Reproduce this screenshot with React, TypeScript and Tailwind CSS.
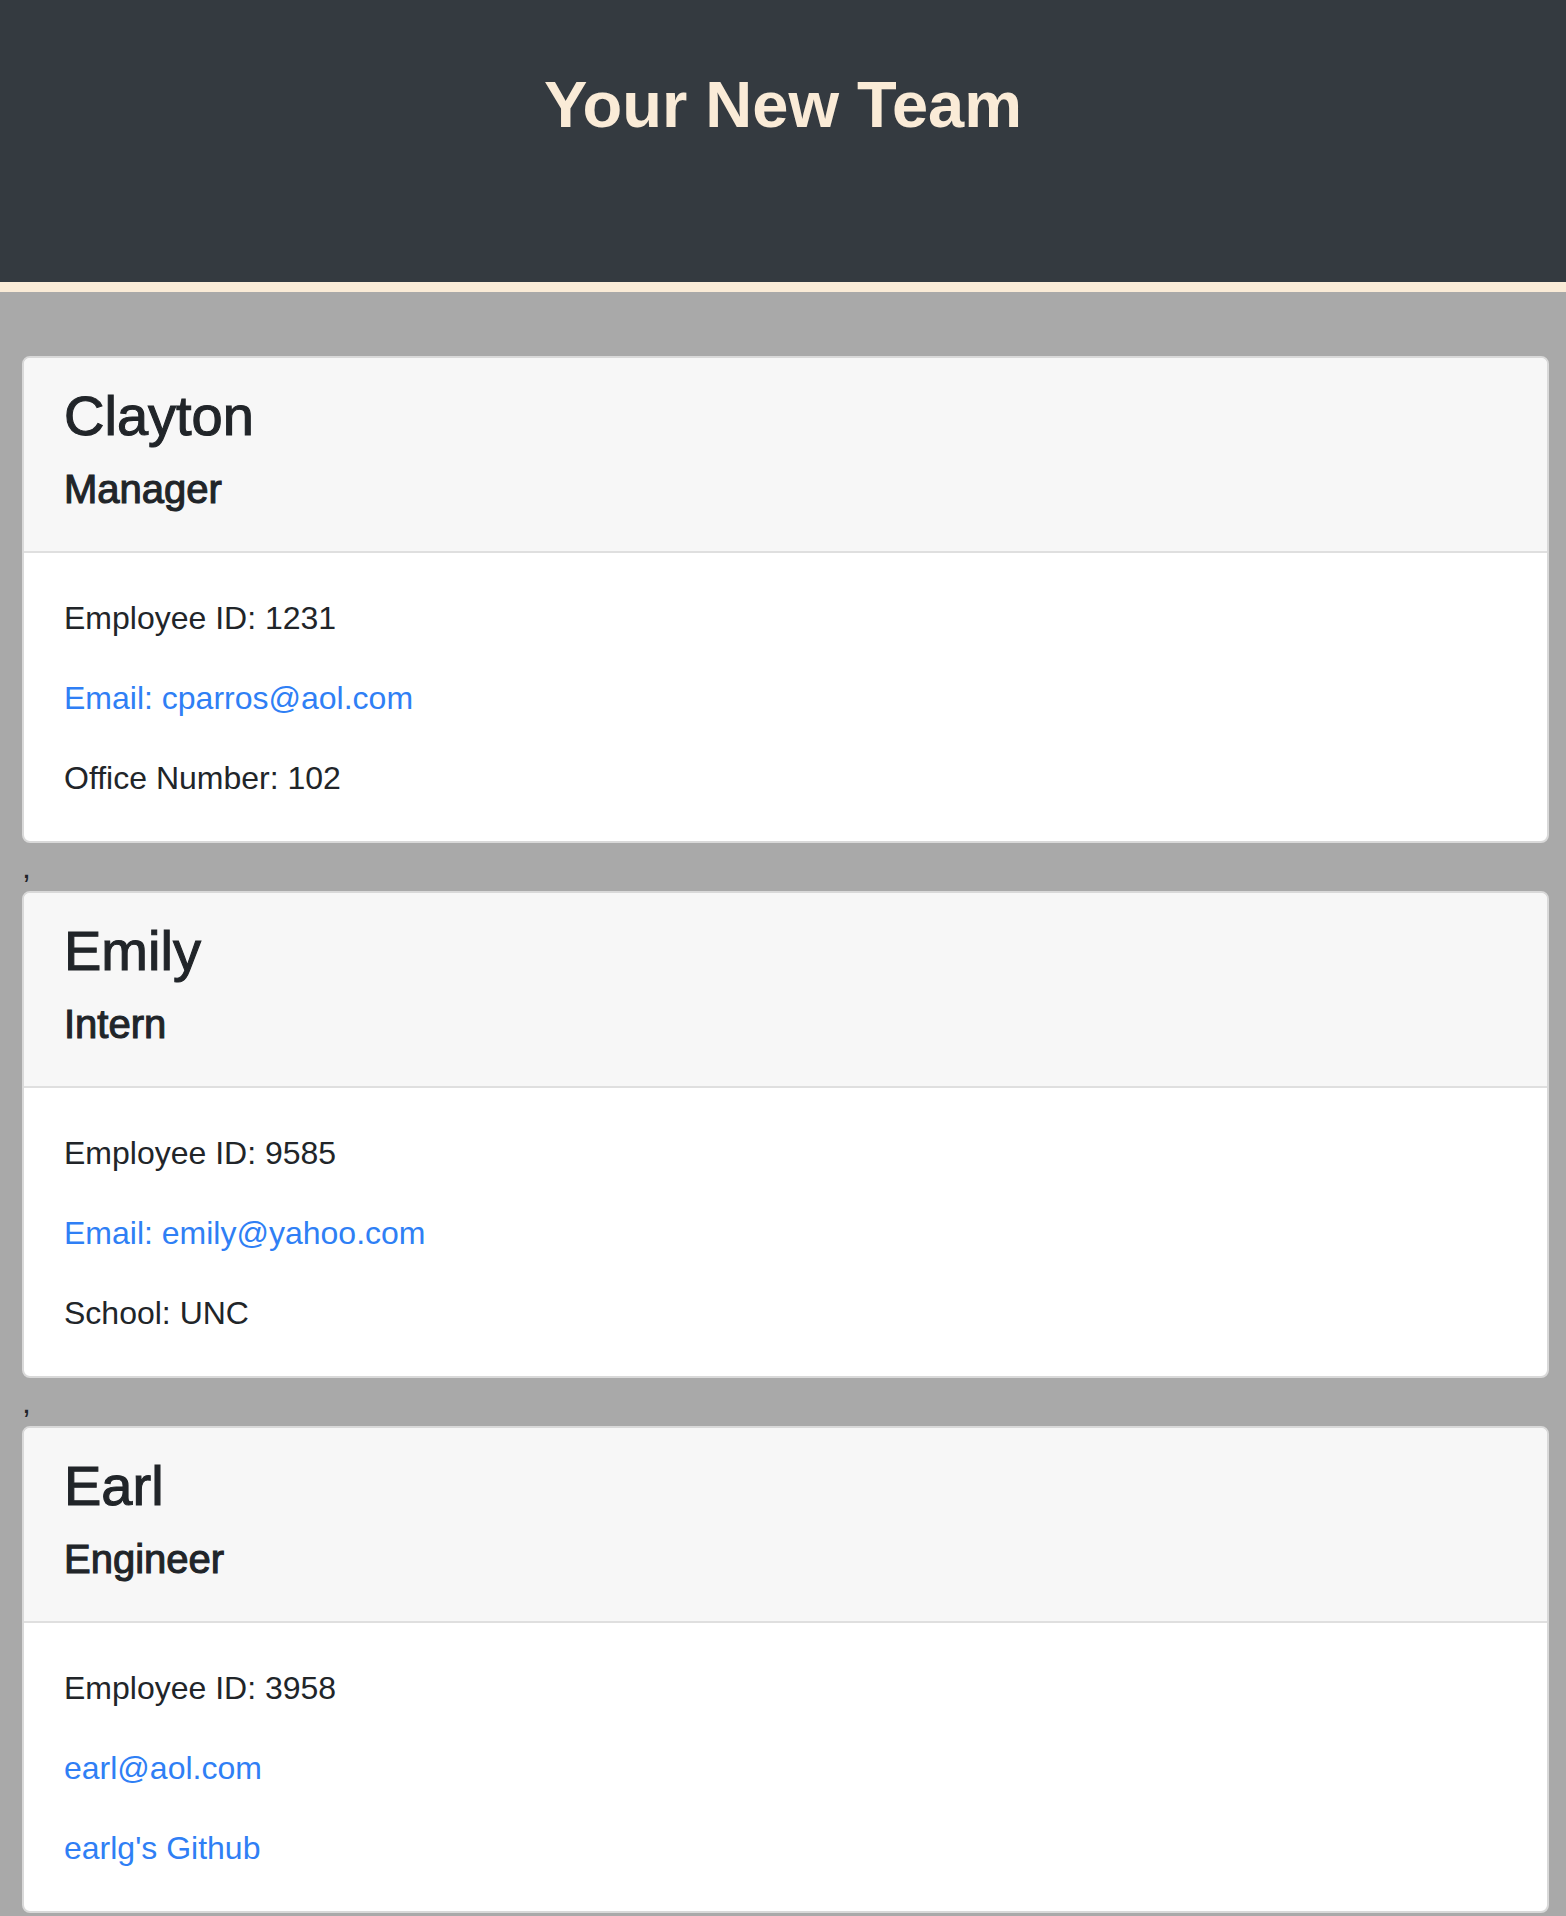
const team = [
  {
    name: 'Clayton',
    role: 'Manager',
    lines: [
      { text: 'Employee ID: 1231' },
      { text: 'Email: cparros@aol.com', link: true },
      { text: 'Office Number: 102' },
    ],
  },
  {
    name: 'Emily',
    role: 'Intern',
    lines: [
      { text: 'Employee ID: 9585' },
      { text: 'Email: emily@yahoo.com', link: true },
      { text: 'School: UNC' },
    ],
  },
  {
    name: 'Earl',
    role: 'Engineer',
    lines: [
      { text: 'Employee ID: 3958' },
      { text: 'earl@aol.com', link: true },
      { text: "earlg's Github", link: true },
    ],
  },
]

function Card({ member }: { member: (typeof team)[number] }) {
  return (
    <div className="overflow-hidden rounded-[8px] border-2 border-[#d9d9d9] bg-white">
      {/* Header */}
      <div className="border-b-2 border-[#dfdfdf] bg-[#f7f7f7] px-[40px] pt-[24px] pb-[22px] [-webkit-text-stroke:1.1px_#212529]">
        <h3 className="mb-[16px] text-[56px] font-normal leading-[67px]">{member.name}</h3>
        <h5 className="mb-[16px] text-[40px] font-normal leading-[48px]">{member.role}</h5>
      </div>

      {/* Body */}
      <div className="flex flex-col gap-[32px] px-[40px] pt-[41px] pb-[39px]">
        {member.lines.map((line, i) => (
          <p key={i} className={line.link ? 'text-[#2f7ff5]' : ''}>
            {line.text}
          </p>
        ))}
      </div>
    </div>
  )
}

export default function App() {
  return (
    <div className="min-h-screen bg-[#a9a9a9] font-['Liberation_Sans',Arial,sans-serif] text-[32px] leading-[48px] text-[#212529]">
      <header className="h-[292px] border-b-[10px] border-[#faebd7] bg-[#343a40] pt-[66px] text-center">
        <h1 className="text-[65px] font-bold leading-[78px] text-[#faebd7]">Your New Team</h1>
      </header>

      <main className="pt-[64px] pl-[22px] pr-[17px]">
        {team.map((member, i) => (
          <div key={member.name}>
            {i > 0 && <div className="h-[48px]">,</div>}
            <Card member={member} />
          </div>
        ))}
      </main>
    </div>
  )
}
